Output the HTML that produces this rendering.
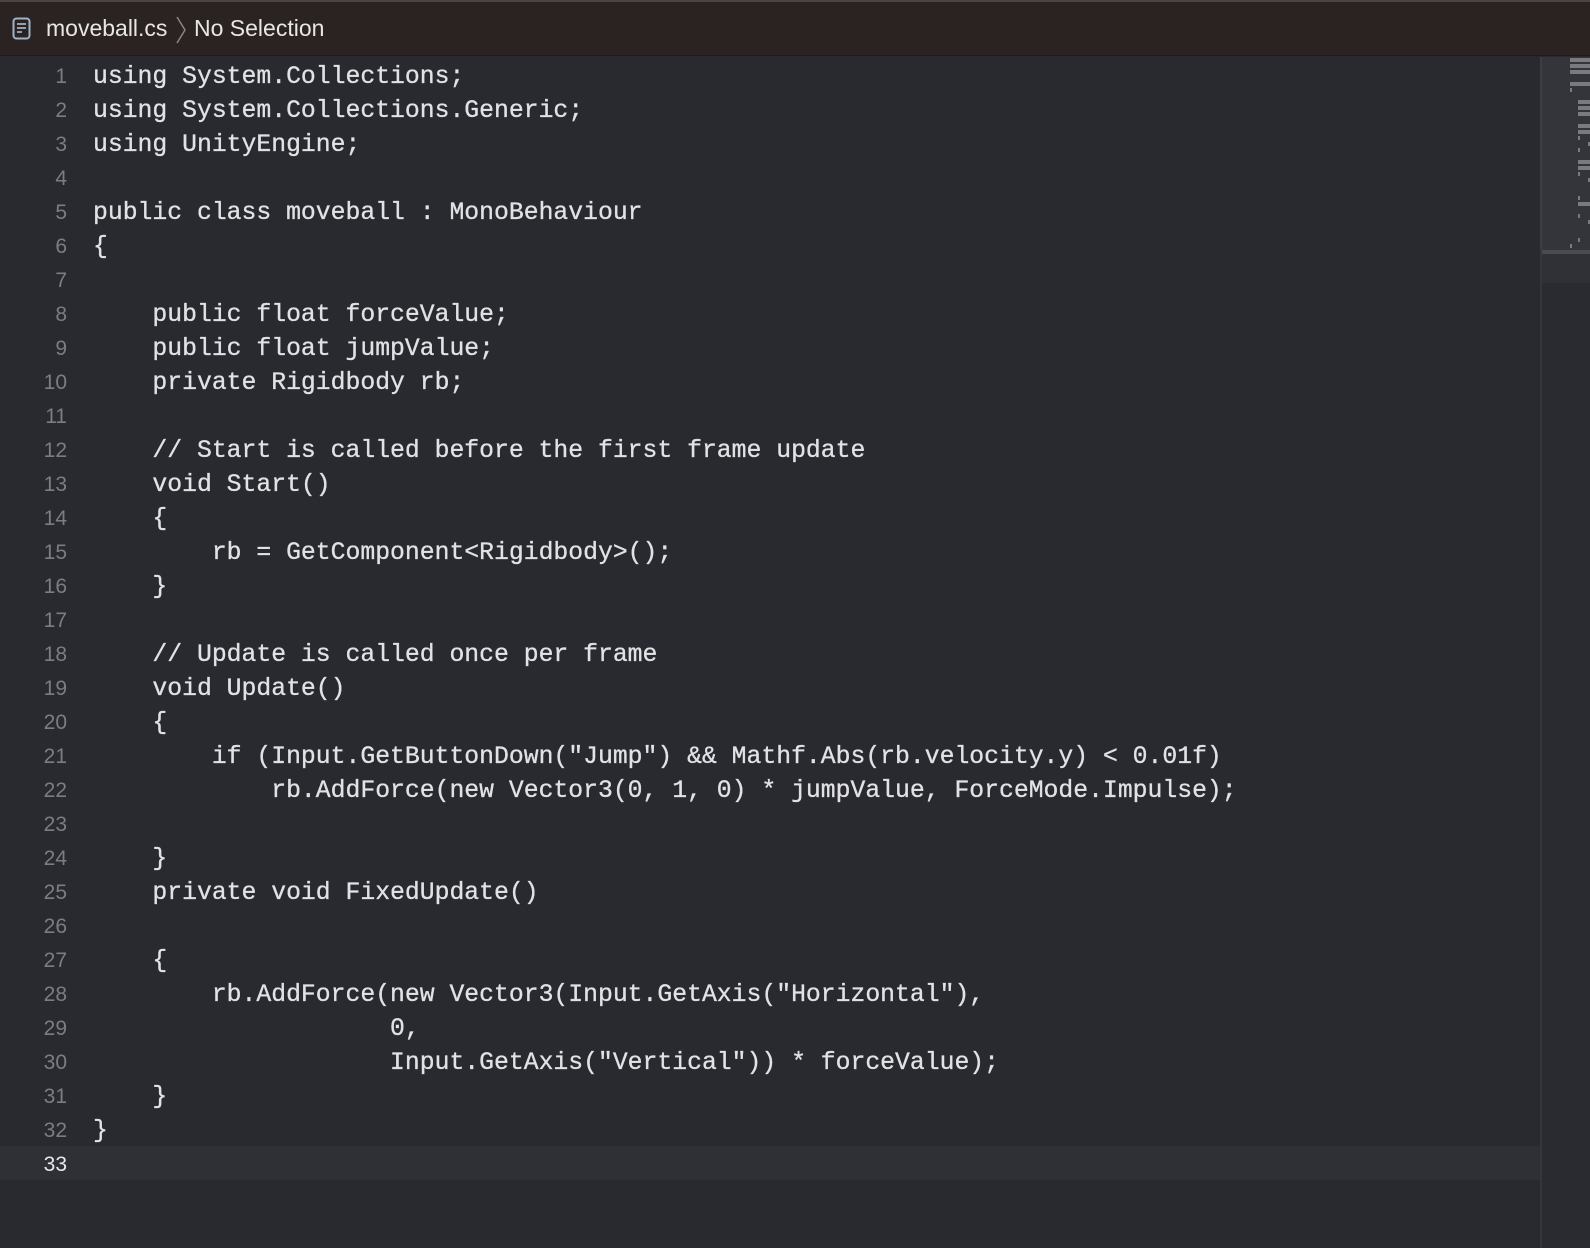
<!DOCTYPE html>
<html><head><meta charset="utf-8"><style>
html,body{margin:0;padding:0;width:1590px;height:1248px;overflow:hidden;background:#292a30;}
#hdr{position:absolute;left:0;top:0;width:1590px;height:56px;background:#2b2322;border-top:2px solid #4a4445;box-sizing:border-box;border-bottom:1px solid #1c1c1c;}
#hdr .t{position:absolute;top:13px;font:23px "Liberation Sans",sans-serif;color:#e8e6e6;}
#ed{position:absolute;left:0;top:57px;width:1540px;height:1191px;background:#292a30;}
.ln{position:absolute;left:0;width:1540px;height:34px;}
.ln .n{position:absolute;left:0;width:67px;text-align:right;top:7px;font:21px "Liberation Sans",sans-serif;color:#7c7d82;}
.ln .c{position:absolute;left:93px;top:4px;font:24.75px/30px "Liberation Mono",monospace;color:#e2e2e5;white-space:pre;-webkit-text-stroke:0.3px #e2e2e5;}
.cur{background:#2f3036;}
.cur .n{color:#e8e8ea;}
#mm{position:absolute;left:1540px;top:57px;width:50px;height:1191px;background:#2a2b31;border-left:2px solid #35363c;box-sizing:border-box;}
#vp{position:absolute;left:1540px;top:57px;width:50px;height:193px;background:#34353b;border-left:2px solid #3d3e44;box-sizing:border-box;}
#vpb{position:absolute;left:1542px;top:250px;width:48px;height:4px;background:#4a4b51;}
#vpc{position:absolute;left:1542px;top:254px;width:48px;height:29px;background:#303137;}
.b{position:absolute;height:4px;background:#7a7a7f;}
</style></head><body>
<div id="hdr">
<svg style="position:absolute;left:12px;top:15px" width="20" height="24" viewBox="0 0 20 24"><rect x="1.5" y="1.5" width="16" height="20" rx="3" fill="none" stroke="#9db3c6" stroke-width="2"/><path d="M5 7h9M5 11h9M5 15h5" stroke="#9db3c6" stroke-width="1.8"/></svg>
<span class="t" style="left:46px">moveball.cs</span>
<svg style="position:absolute;left:175px;top:14px" width="12" height="28" viewBox="0 0 12 28"><path d="M2 1l8 13-8 13" fill="none" stroke="#8a8585" stroke-width="1.5"/></svg>
<span class="t" style="left:194px">No Selection</span>
</div>
<div id="ed">
<div class="ln" style="top:1px"><span class="n">1</span><span class="c">using System.Collections;</span></div>
<div class="ln" style="top:35px"><span class="n">2</span><span class="c">using System.Collections.Generic;</span></div>
<div class="ln" style="top:69px"><span class="n">3</span><span class="c">using UnityEngine;</span></div>
<div class="ln" style="top:103px"><span class="n">4</span><span class="c"></span></div>
<div class="ln" style="top:137px"><span class="n">5</span><span class="c">public class moveball : MonoBehaviour</span></div>
<div class="ln" style="top:171px"><span class="n">6</span><span class="c">{</span></div>
<div class="ln" style="top:205px"><span class="n">7</span><span class="c"></span></div>
<div class="ln" style="top:239px"><span class="n">8</span><span class="c">    public float forceValue;</span></div>
<div class="ln" style="top:273px"><span class="n">9</span><span class="c">    public float jumpValue;</span></div>
<div class="ln" style="top:307px"><span class="n">10</span><span class="c">    private Rigidbody rb;</span></div>
<div class="ln" style="top:341px"><span class="n">11</span><span class="c"></span></div>
<div class="ln" style="top:375px"><span class="n">12</span><span class="c">    // Start is called before the first frame update</span></div>
<div class="ln" style="top:409px"><span class="n">13</span><span class="c">    void Start()</span></div>
<div class="ln" style="top:443px"><span class="n">14</span><span class="c">    {</span></div>
<div class="ln" style="top:477px"><span class="n">15</span><span class="c">        rb = GetComponent&lt;Rigidbody&gt;();</span></div>
<div class="ln" style="top:511px"><span class="n">16</span><span class="c">    }</span></div>
<div class="ln" style="top:545px"><span class="n">17</span><span class="c"></span></div>
<div class="ln" style="top:579px"><span class="n">18</span><span class="c">    // Update is called once per frame</span></div>
<div class="ln" style="top:613px"><span class="n">19</span><span class="c">    void Update()</span></div>
<div class="ln" style="top:647px"><span class="n">20</span><span class="c">    {</span></div>
<div class="ln" style="top:681px"><span class="n">21</span><span class="c">        if (Input.GetButtonDown("Jump") &amp;&amp; Mathf.Abs(rb.velocity.y) &lt; 0.01f)</span></div>
<div class="ln" style="top:715px"><span class="n">22</span><span class="c">            rb.AddForce(new Vector3(0, 1, 0) * jumpValue, ForceMode.Impulse);</span></div>
<div class="ln" style="top:749px"><span class="n">23</span><span class="c"></span></div>
<div class="ln" style="top:783px"><span class="n">24</span><span class="c">    }</span></div>
<div class="ln" style="top:817px"><span class="n">25</span><span class="c">    private void FixedUpdate()</span></div>
<div class="ln" style="top:851px"><span class="n">26</span><span class="c"></span></div>
<div class="ln" style="top:885px"><span class="n">27</span><span class="c">    {</span></div>
<div class="ln" style="top:919px"><span class="n">28</span><span class="c">        rb.AddForce(new Vector3(Input.GetAxis("Horizontal"),</span></div>
<div class="ln" style="top:953px"><span class="n">29</span><span class="c">                    0,</span></div>
<div class="ln" style="top:987px"><span class="n">30</span><span class="c">                    Input.GetAxis("Vertical")) * forceValue);</span></div>
<div class="ln" style="top:1021px"><span class="n">31</span><span class="c">    }</span></div>
<div class="ln" style="top:1055px"><span class="n">32</span><span class="c">}</span></div>
<div class="ln cur" style="top:1089px"><span class="n">33</span><span class="c"></span></div>
</div>
<div id="mm"></div>
<div id="vp"></div>
<div id="vpb"></div>
<div id="vpc"></div>
<div class="b" style="left:1570px;top:58px;width:20px"></div>
<div class="b" style="left:1570px;top:64px;width:20px"></div>
<div class="b" style="left:1570px;top:70px;width:20px"></div>
<div class="b" style="left:1570px;top:82px;width:20px"></div>
<div class="b" style="left:1570px;top:88px;width:2px"></div>
<div class="b" style="left:1578px;top:100px;width:12px"></div>
<div class="b" style="left:1578px;top:106px;width:12px"></div>
<div class="b" style="left:1578px;top:112px;width:12px"></div>
<div class="b" style="left:1578px;top:124px;width:12px"></div>
<div class="b" style="left:1578px;top:130px;width:12px"></div>
<div class="b" style="left:1578px;top:136px;width:2px"></div>
<div class="b" style="left:1588px;top:142px;width:2px"></div>
<div class="b" style="left:1578px;top:148px;width:2px"></div>
<div class="b" style="left:1578px;top:160px;width:12px"></div>
<div class="b" style="left:1578px;top:166px;width:12px"></div>
<div class="b" style="left:1578px;top:172px;width:2px"></div>
<div class="b" style="left:1588px;top:178px;width:2px"></div>
<div class="b" style="left:1578px;top:196px;width:2px"></div>
<div class="b" style="left:1578px;top:202px;width:12px"></div>
<div class="b" style="left:1578px;top:214px;width:2px"></div>
<div class="b" style="left:1588px;top:220px;width:2px"></div>
<div class="b" style="left:1578px;top:238px;width:2px"></div>
<div class="b" style="left:1570px;top:244px;width:2px"></div>
</body></html>
